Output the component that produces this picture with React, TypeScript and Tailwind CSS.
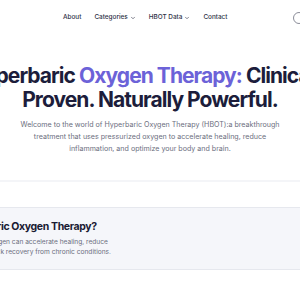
import { ChevronDown } from 'lucide-react'

const NAV = [
  { label: 'About', menu: false },
  { label: 'Categories', menu: true },
  { label: 'HBOT Data', menu: true },
  { label: 'Contact', menu: false },
]

export default function App() {
  return (
    <div className="w-[300px] h-[300px] overflow-hidden bg-white font-['Inter',sans-serif] text-[#1c1d3b]">

      {/* Header */}
      <header className="h-9 flex items-center pl-[63px]">
        <nav className="flex items-center gap-[13px] text-[6.4px] font-medium text-[#2d2f45]">
          {NAV.map(item => (
            <span key={item.label} className="flex items-center gap-[2px]">
              {item.label}
              {item.menu && <ChevronDown size={6} strokeWidth={2.4} />}
            </span>
          ))}
        </nav>
        <span className="ml-auto -mr-[5px] w-[12px] h-[12px] rounded-full border-[1.5px] border-[#8b8d99]" />
      </header>

      {/* Hero */}
      <section className="flex flex-col items-center pt-[28px]">
        <div className="flex justify-center w-full overflow-hidden">
          <h1 className="shrink-0 whitespace-nowrap text-center text-[21px] leading-[24px] font-bold tracking-[-0.045em]">
            Hyperbaric <span className="text-[#6c62d8]">Oxygen Therapy:</span> Clinically
            <br />
            Proven. Naturally Powerful.
          </h1>
        </div>
        <p className="mt-[7px] w-[276px] text-center text-[7.1px] leading-[12px] text-[#6b6e7e]">
          Welcome to the world of Hyperbaric Oxygen Therapy (HBOT):a breakthrough treatment that uses pressurized oxygen to accelerate healing, reduce inflammation, and optimize your body and brain.
        </p>
      </section>

      <div className="mt-[25px] h-[2px] bg-[#f4f5f8]" />

      {/* Info card */}
      <div className="mt-[25px] h-[63px] border-y border-[#e6e8ee] bg-[#f5f6fa] flex flex-col justify-center whitespace-nowrap">
        <h2 className="-ml-[83px] text-[10.5px] leading-[14px] font-bold tracking-[-0.035em] text-[#1a1b33]">
          What is Hyperbaric Oxygen Therapy?
        </h2>
        <p className="-ml-[86px] mt-[3px] text-[6.6px] leading-[10px] text-[#6b6e7e]">
          Learn how pressurized oxygen can accelerate healing, reduce
          <br />
          inflammation, and spur quick recovery from chronic conditions.
        </p>
      </div>
    </div>
  )
}
